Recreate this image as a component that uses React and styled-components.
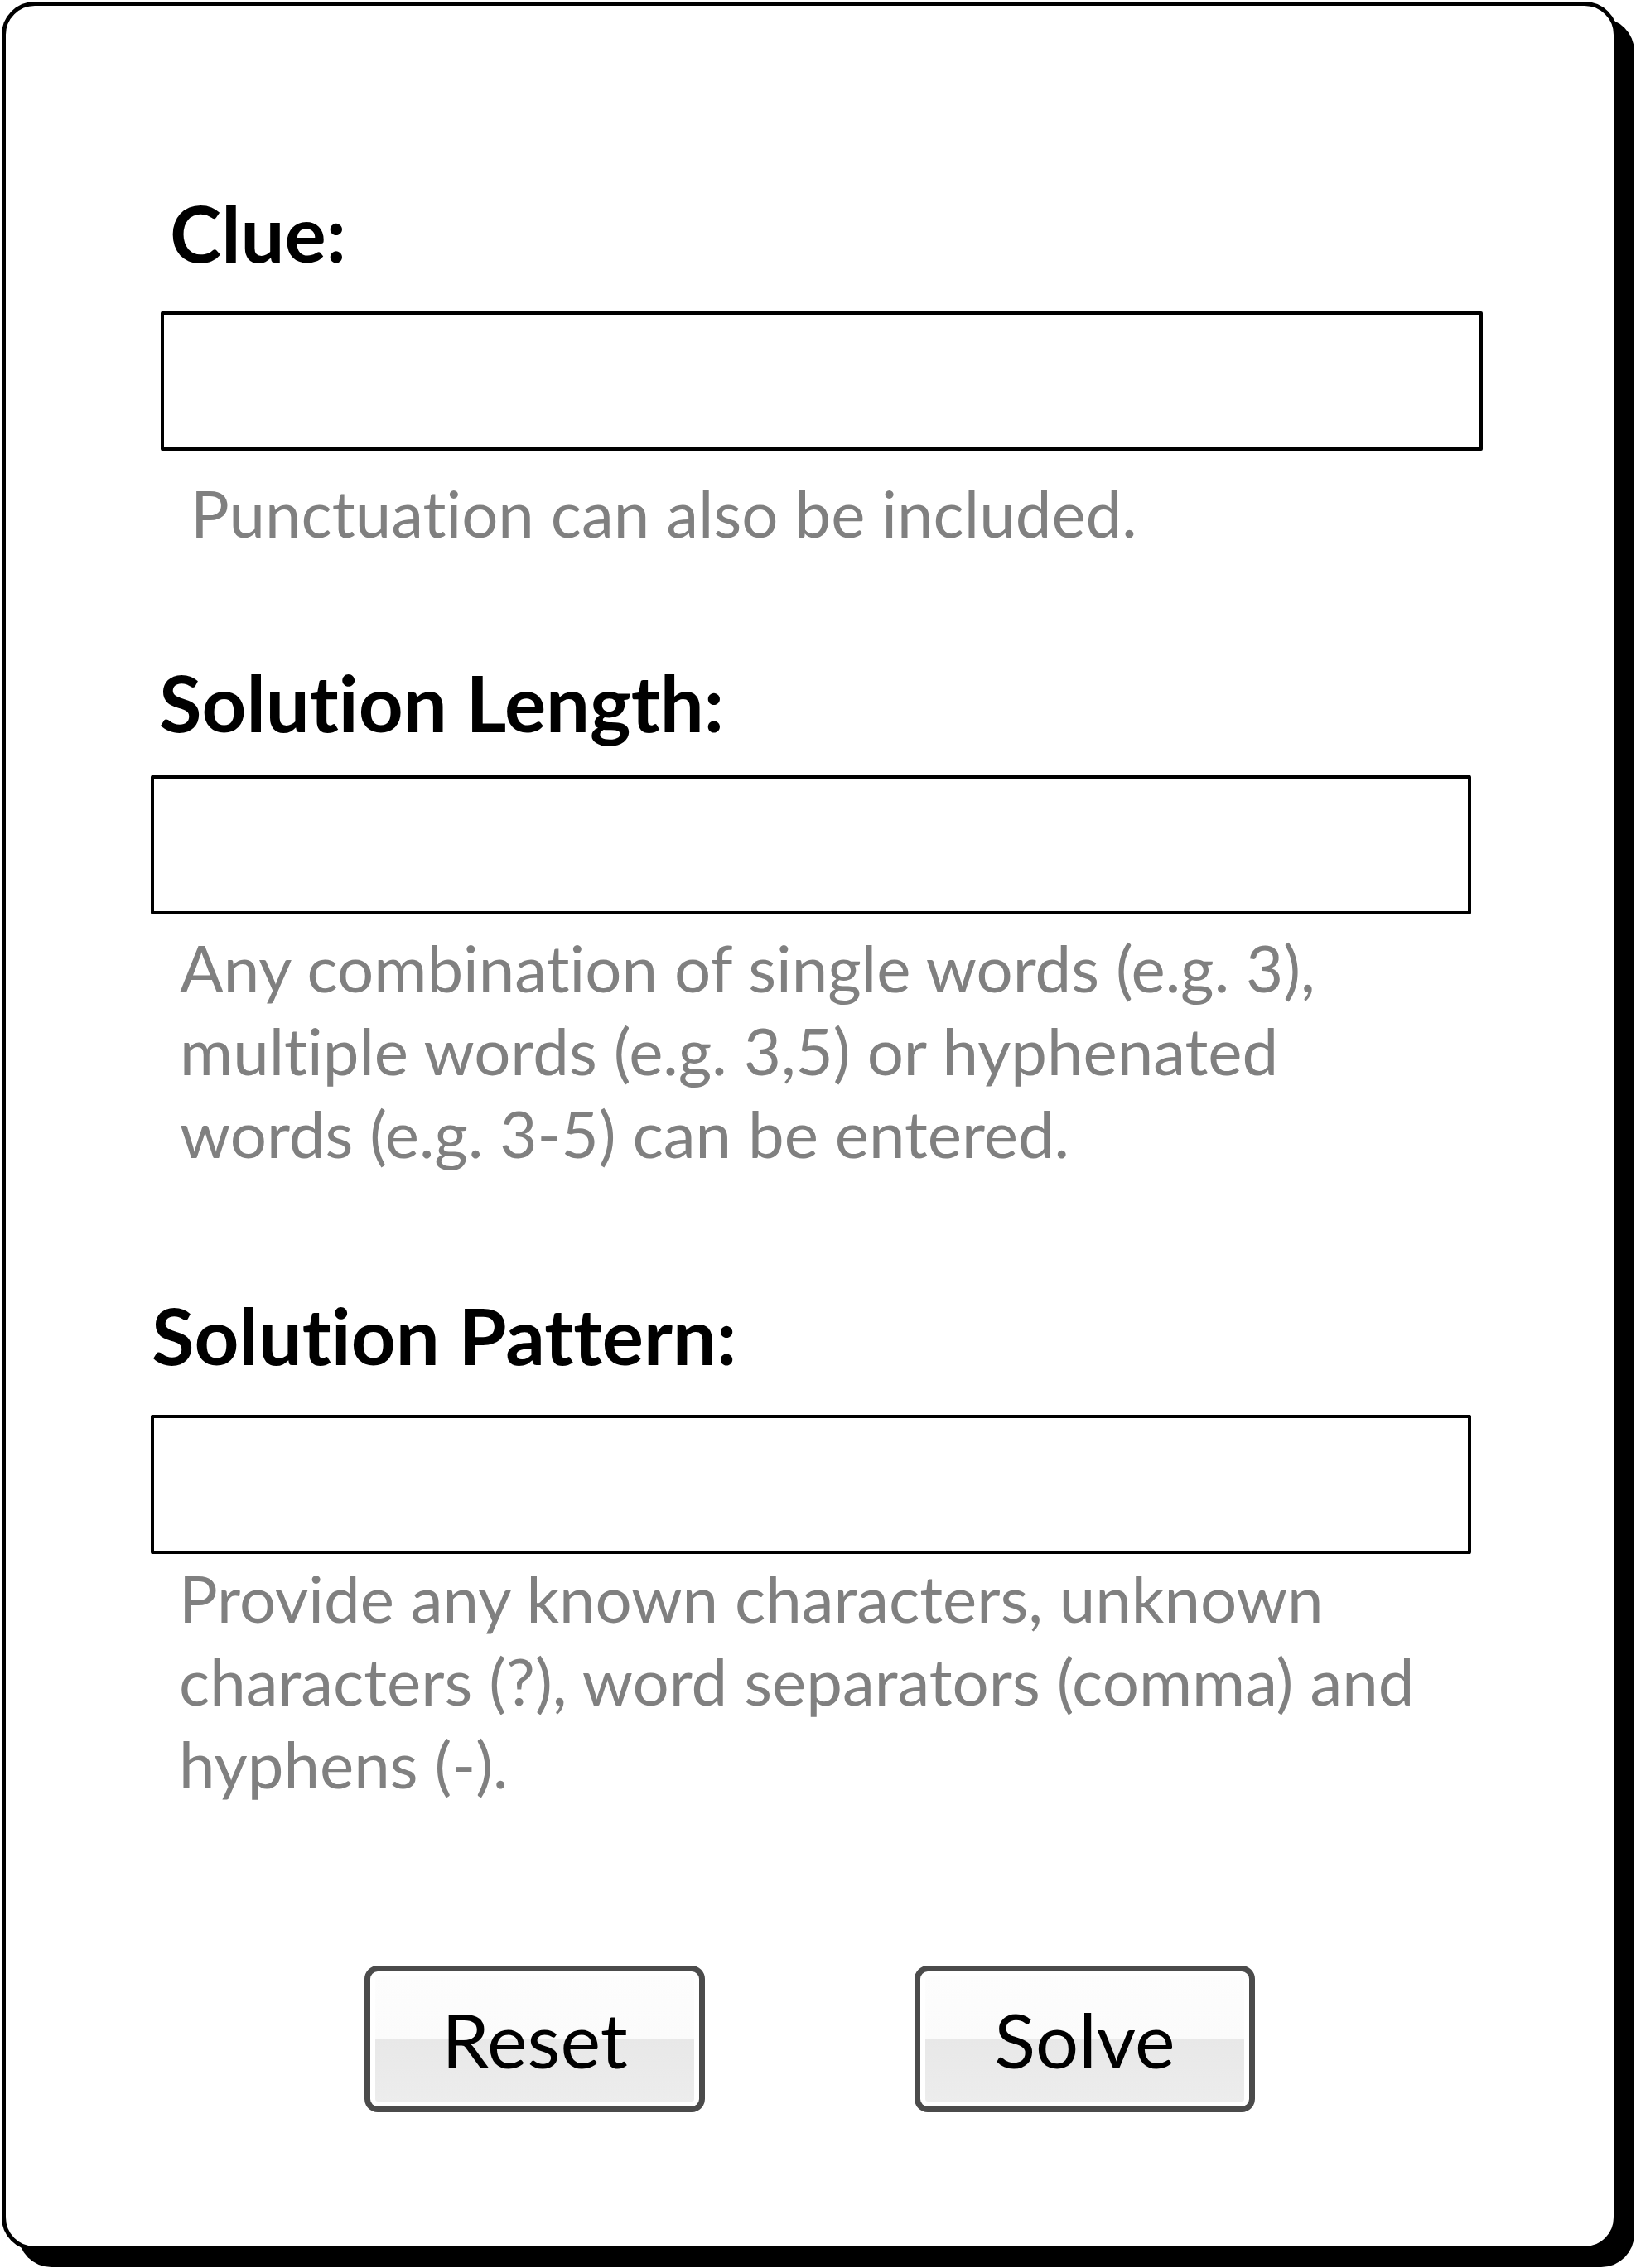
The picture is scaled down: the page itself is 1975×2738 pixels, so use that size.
import React from "react";
import styled, { createGlobalStyle } from "styled-components";

const GlobalStyle = createGlobalStyle`
  html, body {
    margin: 0;
    padding: 0;
    background: #fff;
  }
  body {
    font-family: Lato, "Liberation Sans", sans-serif;
    font-variant-ligatures: none;
  }
`;

const Page = styled.div`
  width: 1975px;
  height: 2738px;
  padding: 2px 0 0 2px;
  box-sizing: border-box;
`;

const Card = styled.form`
  width: 1951px;
  height: 2715px;
  box-sizing: border-box;
  border: 5px solid #000;
  border-radius: 40px;
  box-shadow: 20px 20px 0 0 #000;
  background: #fff;
  padding-top: 224px;
  display: flex;
  flex-direction: column;
`;

const Field = styled.div`
  margin-top: ${(p) => p.$top || 0}px;
  display: flex;
  flex-direction: column;
  align-items: flex-start;
`;

const Label = styled.label`
  margin-left: ${(p) => p.$x}px;
  font-size: 94px;
  line-height: 100px;
  font-weight: 700;
  color: #000;
`;

const TextBox = styled.input`
  display: block;
  box-sizing: border-box;
  margin: ${(p) => p.$gap}px 0 0 ${(p) => p.$x}px;
  width: ${(p) => p.$w}px;
  height: 168px;
  border: 4px solid #000;
  border-radius: 2px;
  background: #fff;
  outline: none;
  padding: 0 24px;
  font-family: inherit;
  font-size: 78px;
`;

const Hint = styled.p`
  margin: ${(p) => p.$gap}px 0 0 ${(p) => p.$x}px;
  font-size: 78px;
  line-height: 100px;
  color: #808080;
`;

const Actions = styled.div`
  margin-top: 194px;
  display: flex;
  justify-content: center;
  gap: 253px;
`;

const Button = styled.button`
  width: 411px;
  height: 177px;
  box-sizing: border-box;
  padding: 6px;
  border: 7px solid #4b4b4b;
  border-radius: 16px;
  background: linear-gradient(to bottom, #fdfdfd 0%, #fbfbfb 50%, #e8e8e8 50%, #ededed 100%);
  background-clip: content-box;
  font-family: inherit;
  font-size: 92px;
  line-height: 1;
  color: #000;
  display: flex;
  align-items: center;
  justify-content: center;
  cursor: pointer;
`;

const fields = [
  {
    label: "Clue:",
    top: 0,
    labelX: 198,
    inputX: 187,
    inputW: 1596,
    inputGap: 45,
    hintX: 223,
    hintGap: 25,
    hint: ["Punctuation can also be included."],
  },
  {
    label: "Solution Length:",
    top: 129,
    labelX: 185,
    inputX: 175,
    inputW: 1594,
    inputGap: 38,
    hintX: 210,
    hintGap: 14,
    hint: [
      "Any combination of single words (e.g. 3),",
      "multiple words (e.g. 3,5) or hyphenated",
      "words (e.g. 3-5) can be entered.",
    ],
  },
  {
    label: "Solution Pattern:",
    top: 144,
    labelX: 176,
    inputX: 175,
    inputW: 1594,
    inputGap: 46,
    hintX: 209,
    hintGap: 3,
    hint: [
      "Provide any known characters, unknown",
      "characters (?), word separators (comma) and",
      "hyphens (-).",
    ],
  },
];

export default function App() {
  return (
    <Page>
      <GlobalStyle />
      <Card onSubmit={(e) => e.preventDefault()}>
        {fields.map((f) => (
          <Field key={f.label} $top={f.top}>
            <Label $x={f.labelX}>{f.label}</Label>
            <TextBox type="text" $x={f.inputX} $w={f.inputW} $gap={f.inputGap} />
            <Hint $x={f.hintX} $gap={f.hintGap}>
              {f.hint.map((line, i) => (
                <React.Fragment key={i}>
                  {i > 0 && <br />}
                  {line}
                </React.Fragment>
              ))}
            </Hint>
          </Field>
        ))}
        <Actions>
          <Button type="reset">Reset</Button>
          <Button type="submit">Solve</Button>
        </Actions>
      </Card>
    </Page>
  );
}
